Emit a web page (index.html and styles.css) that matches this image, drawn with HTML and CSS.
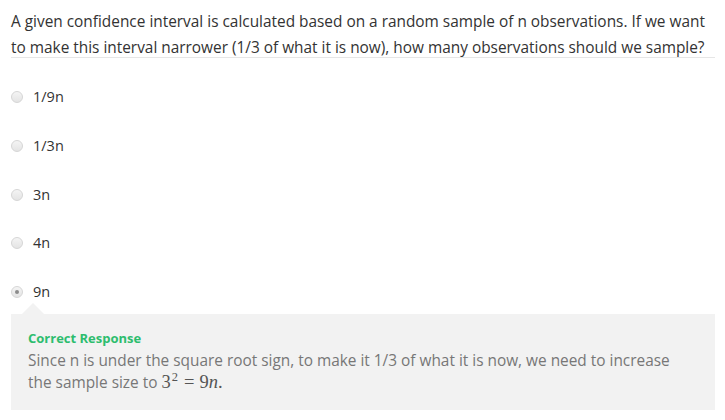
FILE: index.html
```html
<!DOCTYPE html>
<html>
<head>
<meta charset="utf-8">
<link rel="stylesheet" href="styles.css">
</head>
<body>
<div class="quiz">
  <div class="question">A given confidence interval is calculated based on a random sample of n observations. If we want to make this interval narrower (1/3 of what it is now), how many observations should we sample?</div>
  <div class="divider"></div>
  <ul class="options">
    <li class="option"><span class="radio"></span><span class="label">1/9n</span></li>
    <li class="option"><span class="radio"></span><span class="label">1/3n</span></li>
    <li class="option"><span class="radio"></span><span class="label">3n</span></li>
    <li class="option"><span class="radio"></span><span class="label">4n</span></li>
    <li class="option"><span class="radio checked"></span><span class="label">9n</span></li>
  </ul>
  <div class="feedback">
    <div class="feedback-title">Correct Response</div>
    <div class="feedback-text">Since n is under the square root sign, to make it 1/3 of what it is now, we need to increase the sample size to <span class="math"><span class="mn">3<span class="sup">2</span></span><span class="mo">=</span><span class="mn">9<i>n</i>.</span></span></div>
  </div>
</div>
</body>
</html>
```
FILE: styles.css
```css
html, body {
  margin: 0;
  padding: 0;
  background: #fff;
}
body {
  font-family: "Open Sans", "DejaVu Sans", sans-serif;
  color: #333;
}
.quiz {
  width: 704px;
  padding: 9px 10px 0 11px;
}
.question {
  font-size: 15.4px;
  line-height: 26px;
  color: #333;
  margin-bottom: -4px;
}
.divider {
  height: 1px;
  background: #e6e6e6;
}
.options {
  list-style: none;
  margin: 0;
  padding: 0;
  margin-top: 27px;
}
.option {
  display: flex;
  align-items: center;
  height: 24px;
  margin-bottom: 24.75px;
  font-size: 14.5px;
  color: #333;
}
.option:last-child {
  margin-bottom: 0;
}
.radio {
  width: 12px;
  height: 12px;
  border-radius: 50%;
  border: 1px solid #d6d6d6;
  background: linear-gradient(#f4f4f4, #e4e4e4);
  box-sizing: border-box;
  margin-right: 10px;
  position: relative;
  flex: none;
}
.radio.checked::after {
  content: "";
  position: absolute;
  left: 3px;
  top: 3px;
  width: 4px;
  height: 4px;
  border-radius: 50%;
  background: #8c8c8c;
}
.label {
  line-height: 24px;
}
.feedback {
  position: relative;
  margin-top: 10px;
  background: #f2f2f2;
  padding: 14px 30px 16px 17px;
}
.feedback::before {
  content: "";
  position: absolute;
  left: 11px;
  top: -11px;
  border-left: 11px solid transparent;
  border-right: 11px solid transparent;
  border-bottom: 11px solid #f2f2f2;
}
.feedback-title {
  font-weight: bold;
  font-size: 13px;
  line-height: 20px;
  color: #2dbd6e;
  margin-bottom: 2px;
}
.feedback-text {
  font-size: 15.4px;
  line-height: 22px;
  color: #777;
}
.math {
  font-family: "Liberation Serif", "DejaVu Serif", serif;
  font-size: 18.5px;
  line-height: 1;
  color: #555;
}
.math .sup {
  font-size: 12.5px;
  line-height: 1;
  position: relative;
  top: -7px;
  margin-left: 1px;
}
.math .mo {
  margin: 0 5px 0 6px;
}
.math i {
  font-style: italic;
}
```
